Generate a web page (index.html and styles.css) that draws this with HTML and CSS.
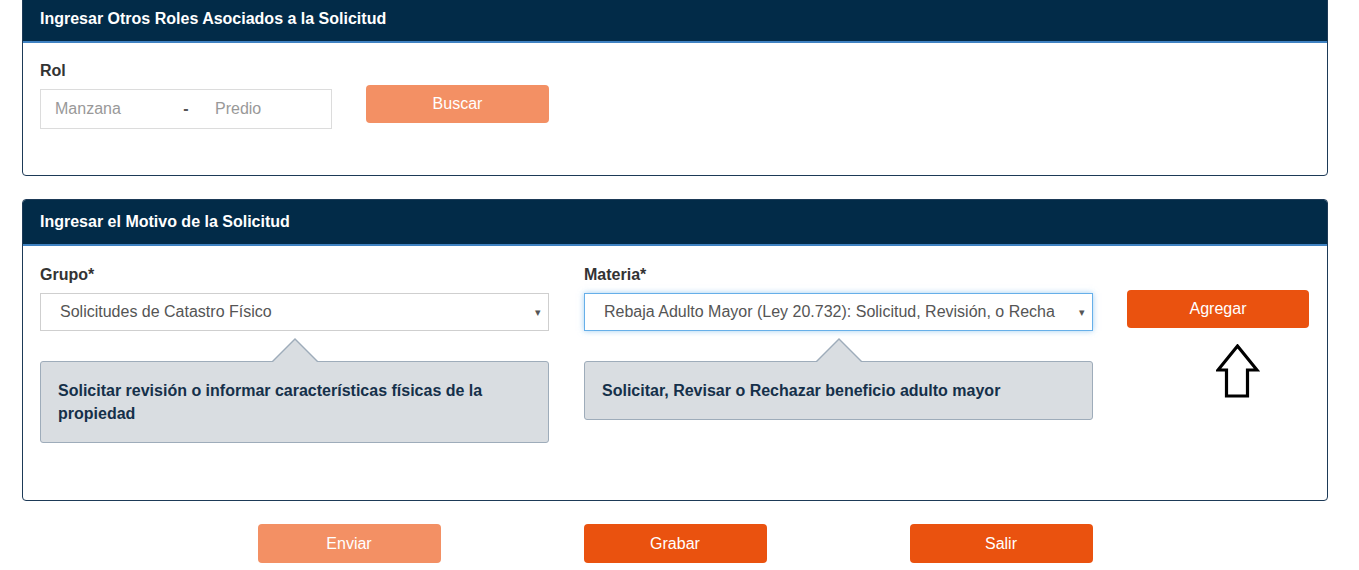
FILE: index.html
```html
<!DOCTYPE html>
<html lang="es">
<head>
  <meta charset="UTF-8">
  <title>Solicitud</title>
  <link rel="stylesheet" href="styles.css">
</head>
<body>
  <div class="page">
    <!-- Otros roles -->
    <div class="panel panel-first">
      <div class="panel-heading">Ingresar Otros Roles Asociados a la Solicitud</div>
      <div class="panel-body panel-body-rol">
        <div class="row">
          <div class="field">
            <label class="label">Rol</label>
            <div class="input-group">
              <input class="input" type="text" placeholder="Manzana">
              <span class="addon">-</span>
              <input class="input" type="text" placeholder="Predio">
            </div>
          </div>
          <div class="action action-rol">
            <button class="btn btn-light">Buscar</button>
          </div>
        </div>
      </div>
    </div>

    <!-- Motivo -->
    <div class="panel">
      <div class="panel-heading">Ingresar el Motivo de la Solicitud</div>
      <div class="panel-body panel-body-motivo">
        <div class="row">
          <div class="col">
            <label class="label">Grupo*</label>
            <div class="select">
              <span class="select-text">Solicitudes de Catastro Físico</span>
              <span class="caret">&#9662;</span>
            </div>
            <div class="hint">Solicitar revisión o informar características físicas de la propiedad</div>
          </div>
          <div class="col">
            <label class="label">Materia*</label>
            <div class="select focused">
              <span class="select-text">Rebaja Adulto Mayor (Ley 20.732): Solicitud, Revisión, o Recha</span>
              <span class="caret">&#9662;</span>
            </div>
            <div class="hint">Solicitar, Revisar o Rechazar beneficio adulto mayor</div>
          </div>
          <div class="action action-motivo">
            <button class="btn btn-dark btn-agregar">Agregar</button>
            <svg class="pointer" width="44" height="56" viewBox="0 0 44 56">
              <path d="M21.5 2 L41 26 L31.5 26 L31.5 52 L10.5 52 L10.5 26 L2 26 Z" fill="#fff" stroke="#000" stroke-width="3.2" stroke-linejoin="miter"/>
            </svg>
          </div>
        </div>
      </div>
    </div>

    <div class="footer">
      <button class="btn btn-light btn-footer">Enviar</button>
      <button class="btn btn-dark btn-footer">Grabar</button>
      <button class="btn btn-dark btn-footer">Salir</button>
    </div>
  </div>
</body>
</html>
```

FILE: styles.css
```css
body {
  margin: 0;
  font-family: "Liberation Sans", Arial, sans-serif;
  background: #fff;
  color: #333;
  overflow: hidden;
}

.page {
  width: 1306px;
  margin-left: 22px;
}

/* Panels */
.panel {
  border: 1px solid #1d3a57;
  border-radius: 4px;
  overflow: hidden;
  margin-bottom: 23px;
}

.panel-first {
  margin-top: -4px;
}

.panel-heading {
  background: #022b48;
  color: #fff;
  font-weight: bold;
  font-size: 16px;
  height: 44px;
  line-height: 44px;
  padding: 0 17px;
  border-bottom: 2px solid #3f82c2;
}

.panel-body {
  padding: 18px 18px 0 17px;
}

.panel-body-rol {
  height: 114px;
}

.panel-body-motivo {
  padding-top: 19px;
  height: 235px;
}

.row {
  display: flex;
  align-items: flex-start;
}

.label {
  display: block;
  font-size: 16px;
  font-weight: bold;
  line-height: 20px;
  height: 20px;
  margin-bottom: 8px;
}

/* Rol input group */
.input-group {
  display: flex;
  width: 292px;
  height: 40px;
  border: 1px solid #dcdcdc;
  box-sizing: border-box;
}

.input {
  border: none;
  outline: none;
  width: 130px;
  padding: 0 14px;
  box-sizing: border-box;
  font-family: inherit;
  font-size: 16px;
  color: #555;
}

.input::placeholder {
  color: #999;
}

.addon {
  width: 32px;
  text-align: center;
  line-height: 38px;
  font-weight: bold;
  font-size: 16px;
  color: #555;
}

.action-rol {
  margin-left: 34px;
  padding-top: 24px;
}

/* Buttons */
.btn {
  width: 183px;
  height: 38px;
  border: none;
  border-radius: 4px;
  color: #fff;
  font-family: inherit;
  font-size: 16px;
  cursor: pointer;
}

.btn-light {
  background: #f39064;
}

.btn-dark {
  background: #ea520f;
}

.btn-agregar {
  width: 182px;
}

/* Motivo columns */
.col {
  width: 509px;
  margin-right: 35px;
  position: relative;
}

.select {
  height: 38px;
  border: 1px solid #cfcfcf;
  box-sizing: border-box;
  display: flex;
  align-items: center;
  padding: 0 7px 0 19px;
  font-size: 16px;
  color: #555;
}

.select.focused {
  border-color: #66afe9;
  box-shadow: 0 0 6px rgba(102, 175, 233, 0.6);
}

.select-text {
  flex: 1;
  white-space: nowrap;
}

.caret {
  font-size: 11px;
  color: #555;
  margin-left: 14px;
}

.hint {
  position: relative;
  margin-top: 30px;
  background: #d9dde1;
  border: 1px solid #9eacba;
  border-radius: 3px;
  padding: 17px 17px;
  font-size: 16px;
  font-weight: bold;
  line-height: 23px;
  color: #15304a;
}

/* little arrow on top of the hint box */
.hint::before,
.hint::after {
  content: "";
  position: absolute;
  border-style: solid;
  border-color: transparent;
}

.hint::before {
  left: 230px;
  top: -24px;
  border-width: 0 24px 24px 24px;
  border-bottom-color: #9eacba;
}

.hint::after {
  left: 231px;
  top: -22px;
  border-width: 0 23px 23px 23px;
  border-bottom-color: #d9dde1;
}

.action-motivo {
  padding-top: 25px;
  margin-left: -1px;
  display: flex;
  flex-direction: column;
}

.pointer {
  margin-top: 16px;
  margin-left: 89px;
}

/* Footer */
.footer {
  display: flex;
  justify-content: center;
  gap: 143px;
}

.btn-footer {
  height: 39px;
}
```
